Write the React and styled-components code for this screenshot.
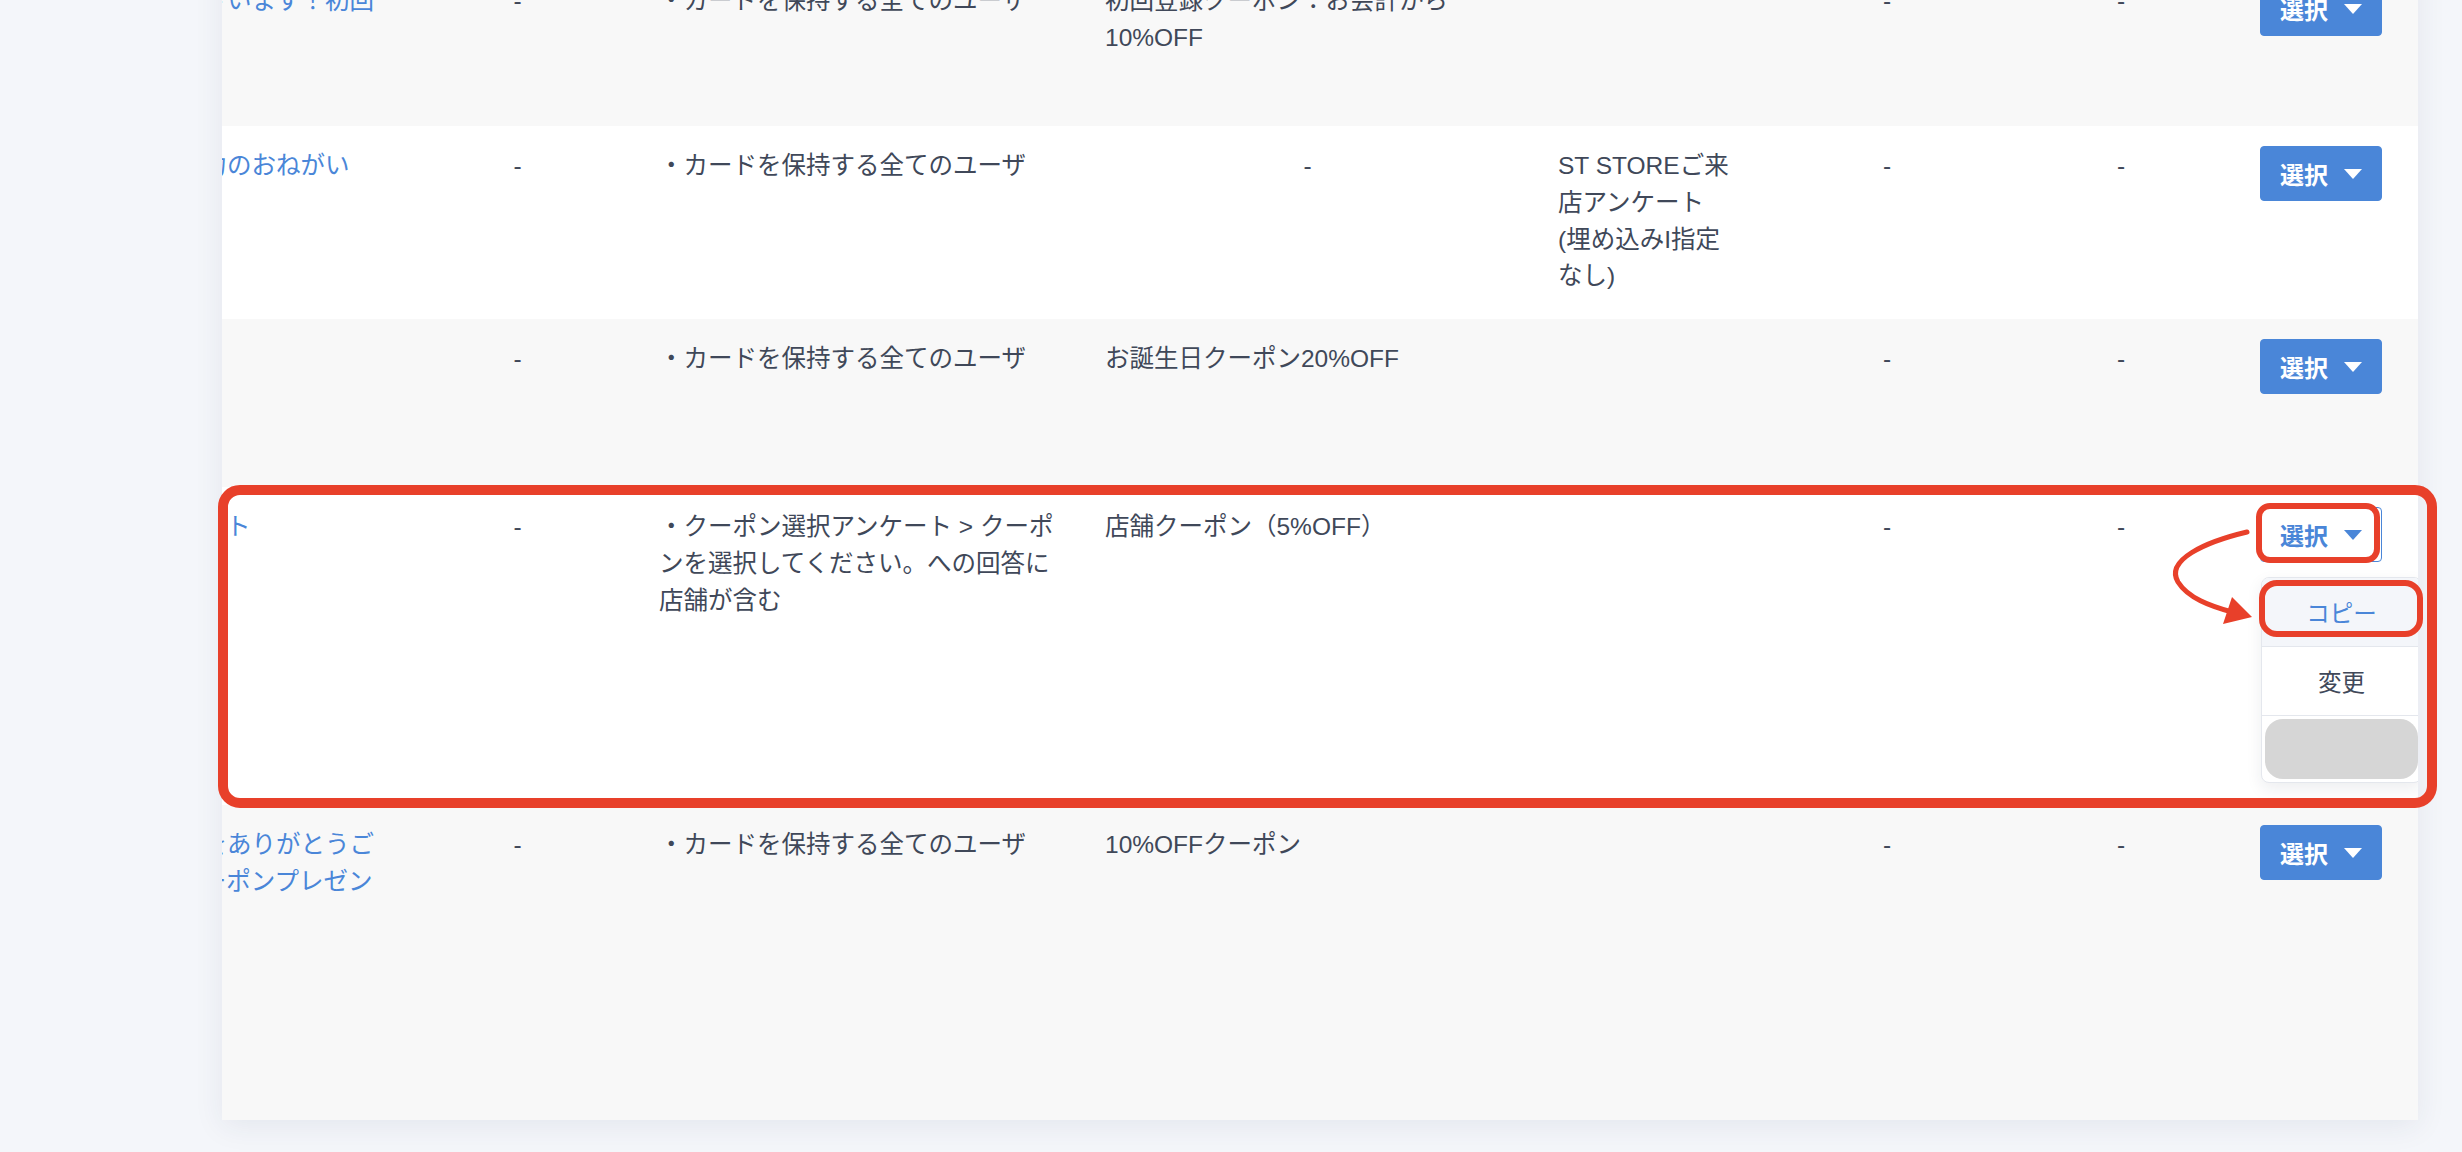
import React, { useLayoutEffect, useRef } from "react";
import styled, { createGlobalStyle } from "styled-components";

const GlobalStyle = createGlobalStyle`
  html, body {
    margin: 0;
    padding: 0;
    background: #f4f6fa;
  }
  body {
    font-family: "Liberation Sans", "Noto Sans CJK JP", sans-serif;
    color: #404859;
    overflow: hidden;
  }
`;

// the list is scrolled sideways, the first column is partly hidden
const SCROLL_X = 166;

const rows = [
  {
    height: 165,
    title: ["りがとうございます！初回"],
    target: ["・カードを保持する全てのユーザ"],
    coupon: ["初回登録クーポン：お会計から", "10%OFF"],
  },
  {
    height: 193,
    title: ["店舗調査協力のおねがい"],
    target: ["・カードを保持する全てのユーザ"],
    coupon: null,
    survey: ["ST STOREご来", "店アンケート", "(埋め込みI指定", "なし)"],
  },
  {
    height: 168,
    title: [],
    target: ["・カードを保持する全てのユーザ"],
    coupon: ["お誕生日クーポン20%OFF"],
  },
  {
    height: 318,
    title: ["選択アンケート"],
    target: [
      "・クーポン選択アンケート > クーポ",
      "ンを選択してください。への回答に",
      "店舗が含む",
    ],
    coupon: ["店舗クーポン（5%OFF）"],
    open: true,
  },
  {
    height: 315,
    title: ["毎度ご来店をありがとうご", "ざいますクーポンプレゼン"],
    target: ["・カードを保持する全てのユーザ"],
    coupon: ["10%OFFクーポン"],
  },
];

function Lines({ items }) {
  return items.map((line, i) => <Line key={i}>{line}</Line>);
}

function App() {
  const scrollRef = useRef(null);

  useLayoutEffect(() => {
    if (scrollRef.current) scrollRef.current.scrollLeft = SCROLL_X;
  }, []);

  return (
    <Page>
      <GlobalStyle />
      <Card>
        <Scroller ref={scrollRef}>
          <List>
            {rows.map((row, index) => (
              <Row key={index} $height={row.height}>
                <TitleCell>
                  <Lines items={row.title} />
                </TitleCell>
                <Cell $center>-</Cell>
                <Cell>
                  <Lines items={row.target} />
                </Cell>
                {row.coupon ? (
                  <Cell>
                    <Lines items={row.coupon} />
                  </Cell>
                ) : (
                  <Cell $center>-</Cell>
                )}
                <Cell>{row.survey && <Lines items={row.survey} />}</Cell>
                <Cell $center>-</Cell>
                <Cell $center>-</Cell>
                <ActionCell>
                  <ButtonWrap>
                    <SelectButton $active={row.open}>
                      選択
                      <Caret />
                    </SelectButton>
                    {row.open && (
                      <Menu>
                        <MenuItem $current>コピー</MenuItem>
                        <MenuItem>変更</MenuItem>
                        <MenuBlank>
                          <Redacted />
                        </MenuBlank>
                      </Menu>
                    )}
                  </ButtonWrap>
                </ActionCell>
              </Row>
            ))}
          </List>
        </Scroller>
      </Card>

      <Mark $x={218} $y={485} $w={2219} $h={323} $line={10} $radius={22} />
      <Mark $x={2256} $y={503} $w={124} $h={60} $line={6} $radius={14} />
      <Mark $x={2259} $y={580} $w={164} $h={57} $line={6} $radius={18} />
      <Arrow width="100" height="110" viewBox="0 0 100 110">
        <path
          d="M87 12 C45 22, 5 40, 18 62 C28 78, 50 86, 72 92"
          fill="none"
          stroke="#e8402a"
          strokeWidth="5"
          strokeLinecap="round"
        />
        <polygon points="92,97 63,104 72,77" fill="#e8402a" />
      </Arrow>
    </Page>
  );
}

export default App;

const Page = styled.div`
  position: relative;
  display: flow-root;
  min-height: 1152px;
  padding: 0 44px 0 222px;
  box-sizing: border-box;
`;

const Card = styled.div`
  width: 2196px;
  margin-top: -39px;
  background: #ffffff;
  box-shadow: 0 6px 28px rgba(40, 52, 90, 0.08);
`;

const Scroller = styled.div`
  width: 100%;
  overflow: hidden;
`;

const List = styled.div`
  width: 2362px;
`;

const Row = styled.div`
  display: grid;
  grid-template-columns: 344px 235px 446px 453px 236px 234px 234px 180px;
  min-height: ${(p) => p.$height}px;
  box-sizing: border-box;
  background: #ffffff;
  &:nth-child(odd) {
    background: #f8f8f8;
  }
`;

const Cell = styled.div`
  padding: 22px 24px;
  font-size: 24.5px;
  line-height: 1.5;
  color: #404859;
  text-align: ${(p) => (p.$center ? "center" : "left")};
`;

const TitleCell = styled(Cell)`
  color: #4a86d8;
`;

const Line = styled.span`
  display: block;
  white-space: nowrap;
`;

const ActionCell = styled.div`
  padding: 20px 0 0 22px;
`;

const ButtonWrap = styled.div`
  position: relative;
  display: inline-block;
`;

const SelectButton = styled.button`
  display: flex;
  align-items: center;
  justify-content: center;
  gap: 16px;
  width: 122px;
  height: 55px;
  padding: 0;
  border: 1px solid #4a86d8;
  border-radius: 4px;
  background: ${(p) => (p.$active ? "#ffffff" : "#4a86d8")};
  color: ${(p) => (p.$active ? "#4a86d8" : "#ffffff")};
  font-family: "Noto Sans CJK JP", sans-serif;
  font-size: 24px;
  font-weight: 700;
  cursor: pointer;
`;

const Caret = styled.span`
  width: 0;
  height: 0;
  border-left: 9.5px solid transparent;
  border-right: 9.5px solid transparent;
  border-top: 10px solid currentColor;
`;

const Menu = styled.div`
  position: absolute;
  top: calc(100% + 15px);
  left: 1px;
  width: 159px;
  background: #ffffff;
  border: 1px solid #e4e7ed;
  border-radius: 8px;
  box-shadow: 0 6px 16px rgba(30, 40, 70, 0.08);
  overflow: hidden;
  z-index: 2;
`;

const MenuItem = styled.div`
  height: 68px;
  display: flex;
  align-items: center;
  justify-content: center;
  font-family: "Noto Sans CJK JP", sans-serif;
  font-size: 23.5px;
  color: ${(p) => (p.$current ? "#4a86d8" : "#404859")};
  background: ${(p) => (p.$current ? "#f4f6fa" : "#ffffff")};
  & + & {
    border-top: 1px solid #e4e7ed;
  }
`;

const MenuBlank = styled.div`
  border-top: 1px solid #e4e7ed;
  padding: 3px;
`;

const Redacted = styled.div`
  height: 60px;
  border-radius: 18px;
  background: #d6d6d6;
`;

const Mark = styled.div`
  position: absolute;
  left: ${(p) => p.$x}px;
  top: ${(p) => p.$y}px;
  width: ${(p) => p.$w}px;
  height: ${(p) => p.$h}px;
  box-sizing: border-box;
  border: ${(p) => p.$line}px solid #e8402a;
  border-radius: ${(p) => p.$radius}px;
  pointer-events: none;
  z-index: 5;
`;

const Arrow = styled.svg`
  position: absolute;
  left: 2160px;
  top: 520px;
  overflow: visible;
  pointer-events: none;
  z-index: 5;
`;
